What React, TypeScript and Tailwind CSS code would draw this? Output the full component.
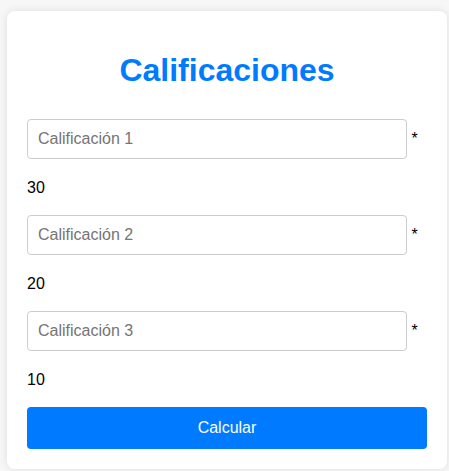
import { useState } from "react";

const notas = [
  { placeholder: "Calificación 1", valor: "30" },
  { placeholder: "Calificación 2", valor: "20" },
  { placeholder: "Calificación 3", valor: "10" },
];

export default function App() {
  const [valores, setValores] = useState(["", "", ""]);

  return (
    <div className="min-h-[471px] bg-[#f7f7f7] pt-[11px] pl-[7px] font-['Liberation_Sans',Arial,sans-serif] text-base text-black">
      <div className="w-[440px] rounded-lg bg-white p-5 shadow-[0_0_8px_rgba(0,0,0,0.1)]">
        <h1 className="mt-[21px] mb-[30px] text-center text-[32px] leading-[37px] font-bold text-[#007bff]">
          Calificaciones
        </h1>
        {notas.map((n, i) => (
          <div key={n.placeholder}>
            <div className="h-10 leading-[18px]">
              <input
                type="number"
                placeholder={n.placeholder}
                value={valores[i]}
                onChange={(e) => {
                  const next = [...valores];
                  next[i] = e.target.value;
                  setValores(next);
                }}
                className="h-10 w-[380px] rounded border border-[#ccc] px-[10px] text-base placeholder:text-[#757575] focus:outline-none"
              />{" "}
              *
            </div>
            <p className="mt-[20px] mb-[18px] leading-[18px]">{n.valor}</p>
          </div>
        ))}
        <button
          type="button"
          className="h-[42px] w-full rounded bg-[#007bff] text-base text-white"
        >
          Calcular
        </button>
      </div>
    </div>
  );
}
